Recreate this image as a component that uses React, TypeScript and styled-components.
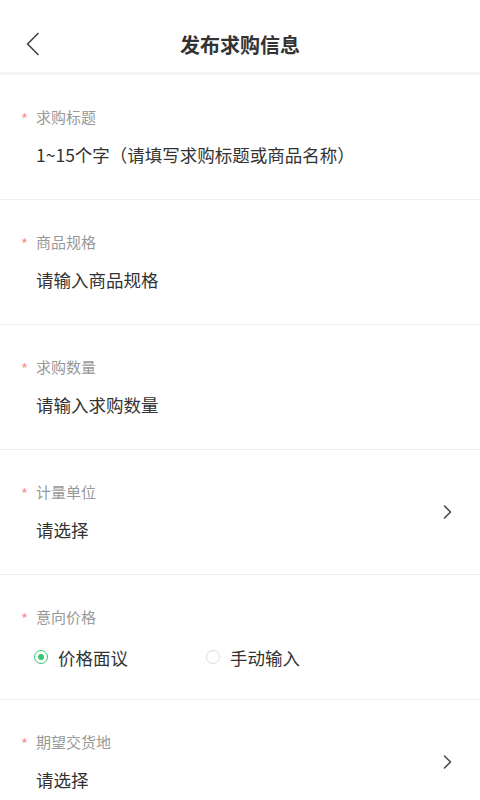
import React from "react";
import styled, { createGlobalStyle } from "styled-components";

const Global = createGlobalStyle`
  html, body { margin: 0; padding: 0; background: #fff; }
  body { font-family: "Noto Sans CJK SC", "Noto Sans", sans-serif; -webkit-font-smoothing: antialiased; }
  * { box-sizing: border-box; }
`;

const Page = styled.div`
  width: 480px;
  height: 800px;
  overflow: hidden;
  background: #fff;
`;

const Header = styled.header`
  height: 75px;
  display: grid;
  grid-template-columns: 72px 1fr 72px;
  align-items: center;
  border-bottom: 3px solid #f4f4f4;
  padding-top: 16px;
`;

const BackButton = styled.div`
  display: flex;
  align-items: center;
  padding-left: 25px;
  height: 100%;
`;

const Title = styled.h1`
  margin: 0;
  text-align: center;
  font-size: 20px;
  font-weight: 700;
  color: #333;
`;

const Field = styled.div`
  height: 125px;
  border-bottom: 1px solid #efefef;
  display: flex;
  align-items: center;
  padding-right: 28px;
`;

const FieldBody = styled.div`
  flex: 1;
  align-self: stretch;
  padding-top: 31px;
  display: flex;
  flex-direction: column;
  gap: 17px;
`;

const Label = styled.div`
  display: flex;
  align-items: center;
  height: 20px;
  padding-left: 21px;
  font-size: 15px;
  color: #999;
`;

const Star = styled.span`
  width: 15px;
  color: #ff8f96;
  font-size: 15px;
  line-height: 20px;
  padding-top: 5px;
`;

const Value = styled.div`
  height: 24px;
  line-height: 24px;
  padding-left: 36px;
  font-size: 17.5px;
  color: #333;
`;

const RadioRow = styled.div`
  display: flex;
  align-items: center;
  height: 24px;
  padding-left: 34px;
  margin-top: 2px;
`;

const Option = styled.div<{ $width?: number }>`
  display: flex;
  align-items: center;
  gap: 10px;
  width: ${(p) => (p.$width ? `${p.$width}px` : "auto")};
  font-size: 17.5px;
  color: #333;
`;

const Circle = styled.span<{ $on?: boolean }>`
  width: 14px;
  height: 14px;
  border-radius: 50%;
  border: 1.5px solid ${(p) => (p.$on ? "#3dc472" : "#dcdcdc")};
  display: flex;
  align-items: center;
  justify-content: center;
  &::after {
    content: "";
    width: 6px;
    height: 6px;
    border-radius: 50%;
    background: ${(p) => (p.$on ? "#3dc472" : "transparent")};
  }
`;

const Chevron = () => (
  <svg width="10" height="16" viewBox="0 0 10 16" fill="none">
    <path d="M2.5 2l6 6-6 6" stroke="#4a4a55" strokeWidth="1.6" strokeLinecap="round" strokeLinejoin="round" />
  </svg>
);

const BackIcon = () => (
  <svg width="16" height="24" viewBox="0 0 16 24" fill="none">
    <path d="M13 1.5L2.5 12 13 22.5" stroke="#444" strokeWidth="1.7" strokeLinecap="round" strokeLinejoin="round" />
  </svg>
);

type FieldData = { label: string; value?: string; arrow?: boolean; radio?: boolean };

const fields: FieldData[] = [
  { label: "求购标题", value: "1~15个字（请填写求购标题或商品名称）" },
  { label: "商品规格", value: "请输入商品规格" },
  { label: "求购数量", value: "请输入求购数量" },
  { label: "计量单位", value: "请选择", arrow: true },
  { label: "意向价格", radio: true },
  { label: "期望交货地", value: "请选择", arrow: true },
];

export default function App() {
  return (
    <Page>
      <Global />
      <Header>
        <BackButton>
          <BackIcon />
        </BackButton>
        <Title>发布求购信息</Title>
        <div />
      </Header>
      {fields.map((f) => (
        <Field key={f.label}>
          <FieldBody>
            <Label>
              <Star>*</Star>
              {f.label}
            </Label>
            {f.radio ? (
              <RadioRow>
                <Option $width={172}>
                  <Circle $on />
                  价格面议
                </Option>
                <Option>
                  <Circle />
                  手动输入
                </Option>
              </RadioRow>
            ) : (
              <Value>{f.value}</Value>
            )}
          </FieldBody>
          {f.arrow && <Chevron />}
        </Field>
      ))}
    </Page>
  );
}
